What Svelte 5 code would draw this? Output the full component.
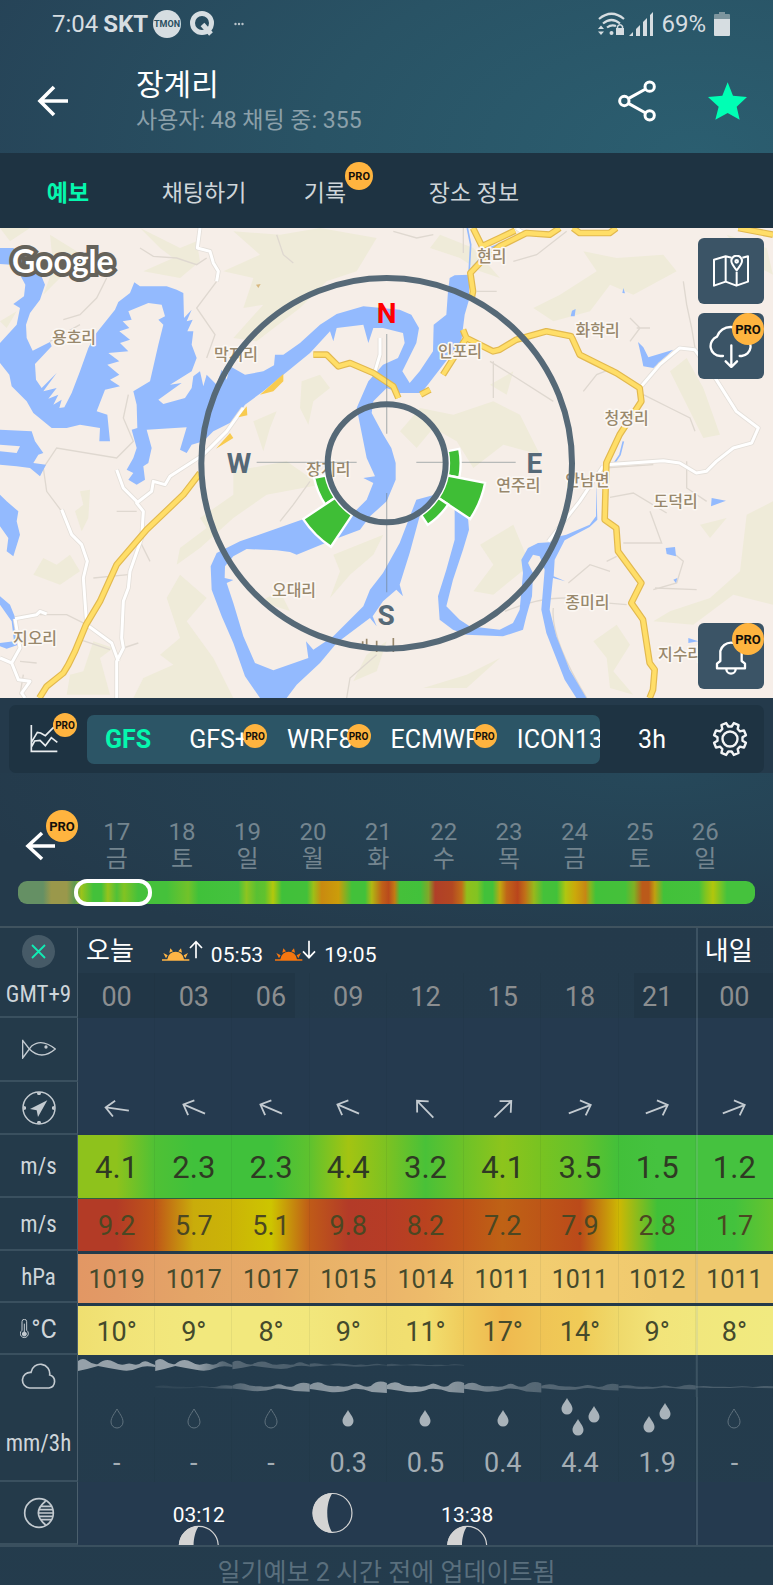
<script lang="ts">
  type Rose = { from: number; to: number; outer: number };

  const tabs = [
    { label: '예보', pro: false },
    { label: '채팅하기', pro: false },
    { label: '기록', pro: true },
    { label: '장소 정보', pro: false }
  ];
  let activeTab = $state('예보');

  const models = [
    { name: 'GFS', pro: false },
    { name: 'GFS+', pro: true },
    { name: 'WRF8', pro: true },
    { name: 'ECMWF', pro: true },
    { name: 'ICON13', pro: false }
  ];
  let activeModel = $state('GFS');

  const days = [
    ['17', '금'], ['18', '토'], ['19', '일'], ['20', '월'], ['21', '화'],
    ['22', '수'], ['23', '목'], ['24', '금'], ['25', '토'], ['26', '일']
  ];

  // wind strength over the whole forecast, percent -> colour
  const strip: [number, string][] = [
    [0, '#659064'], [3.4, '#659064'], [4.5, '#9a984b'], [6.6, '#9a984b'], [7.7, '#5e9a50'],
    [8.6, '#9bc31b'], [10.2, '#43c13a'], [11.3, '#43c13a'], [12.2, '#97c31c'], [13.4, '#50c038'],
    [14.4, '#82c322'], [16.3, '#45c13b'], [20.2, '#45c13b'], [23.1, '#72c22a'], [24.5, '#40c13a'],
    [29.9, '#45c23e'], [31, '#8ec420'], [32.4, '#58c033'], [33.5, '#60c22e'], [34.6, '#b4c80c'],
    [35.8, '#40c03a'], [39.2, '#43c03a'], [40.1, '#9dbf17'], [41.2, '#c98a10'], [43.5, '#cb9d0a'],
    [45.3, '#42c13a'], [47.1, '#42c13a'], [48, '#b0b813'], [49.4, '#c06018'], [50.3, '#b94a1c'],
    [51.1, '#c27a14'], [51.8, '#45c03a'], [54.6, '#42c13b'], [55.7, '#82a728'], [56.6, '#b03f28'],
    [58.9, '#b34722'], [60.2, '#c06f18'], [60.9, '#90c01c'], [62.3, '#82c422'], [63.3, '#42c13a'],
    [64.4, '#42c13a'], [65.4, '#c0a810'], [66.3, '#c06518'], [67.8, '#b9451c'], [68.8, '#c07018'],
    [70, '#98b81c'], [71.3, '#45c13a'], [73.1, '#42c13a'], [74.3, '#b0c610'], [75.6, '#cba80a'],
    [77, '#c68714'], [77.7, '#80b820'], [78.4, '#42c13a'], [82.4, '#45c13a'], [83.6, '#80b024'],
    [84.7, '#bb5a1a'], [85.6, '#bb5a1a'], [86.4, '#c0a010'], [87.6, '#42c13a'], [92.4, '#45c23c'],
    [93.3, '#80c420'], [94.3, '#b2c60c'], [96.2, '#45c23d'], [100, '#45c23d']
  ];
  const stripGradient = `linear-gradient(to right, ${strip.map(([p, c]) => `${c} ${p}%`).join(', ')})`;

  const hours = ['00', '03', '06', '09', '12', '15', '18', '21', '00'];
  const arrows = [188, 203, 203, 203, 226, -44, -21, -21, -21];
  const wind = ['4.1', '2.3', '2.3', '4.4', '3.2', '4.1', '3.5', '1.5', '1.2'];
  const gust = ['9.2', '5.7', '5.1', '9.8', '8.2', '7.2', '7.9', '2.8', '1.7'];
  const pressure = ['1019', '1017', '1017', '1015', '1014', '1011', '1011', '1012', '1011'];
  const temp = ['10', '9', '8', '9', '11', '17', '14', '9', '8'];
  const rain = ['-', '-', '-', '0.3', '0.5', '0.4', '4.4', '1.9', '-'];

  // two colours per column: left edge, centre, plus the closing edge
  const windColors = ['#8ec21c', '#8ec21c', '#4fc135', '#40c13b', '#40c13b', '#40c13b', '#5fc22e', '#a3c412', '#7cc222', '#49c138', '#6dc228', '#8dc41c', '#78c321', '#66c22b', '#42c03a', '#45c23f', '#45c23f', '#45c23f', '#45c23f'];
  const gustColors = ['#b33b26', '#b33b26', '#bf5518', '#c9ac0b', '#cbb407', '#cdc500', '#bf5a18', '#b33b28', '#b63c26', '#b9421f', '#bd5018', '#bf6215', '#bd5617', '#bb4a1a', '#cdb804', '#40c038', '#40c13b', '#43c23d', '#66c42e'];
  const pressureColors = ['#e29764', '#e29a66', '#e3a067', '#e4a567', '#e5a868', '#e6a967', '#e8b067', '#eab46a', '#ebb56a', '#edbb6a', '#efc46c', '#f1cb6f', '#f2cd70', '#f1cb6f', '#f1cb6f', '#efc96e', '#efc96e', '#efc96e', '#efc96e'];
  const tempColors = ['#efdf70', '#f1e377', '#f2e67b', '#f2e87d', '#f2e87d', '#f2e87d', '#f2e77c', '#f1e378', '#f0de70', '#f2e070', '#efcb5b', '#efb94f', '#efc455', '#f0cb57', '#efd96b', '#f2e47a', '#f1e77d', '#f1e97e', '#f1ea80'];

  function cellGradient(colors: string[], i: number) {
    return `linear-gradient(to right, ${colors[i * 2]}, ${colors[i * 2 + 1]}, ${colors[i * 2 + 2]})`;
  }

  // drop positions inside a 60x42 cell
  const drops: Record<string, number[][]> = {
    '4.4': [[17, 9], [44, 17], [28, 30]],
    '1.9': [[22, 27], [38, 14]]
  };

  // thickness of the cloud layers per column
  const highCloud = [1, 1, 0.7, 0.3, 0.2, 0, 0, 0, 0];
  const lowCloud = [0, 0.3, 0.8, 1, 1, 0.9, 0.6, 0.4, 0.2];

  const roses: Rose[] = [
    { from: -11.25, to: 11.25, outer: 222 },
    { from: 11.25, to: 33.75, outer: 301 },
    { from: 33.75, to: 56.25, outer: 222 },
    { from: 146.25, to: 168.75, outer: 222 },
    { from: 123.75, to: 146.25, outer: 301 }
  ];

  function polar(r: number, deg: number) {
    const a = (deg * Math.PI) / 180;
    return `${(1160 + r * Math.cos(a)).toFixed(1)} ${(706 + r * Math.sin(a)).toFixed(1)}`;
  }

  function sector({ from, to, outer }: Rose) {
    const inner = 187;
    return `M${polar(inner, from)}L${polar(outer, from)}A${outer} ${outer} 0 0 1 ${polar(outer, to)}L${polar(inner, to)}A${inner} ${inner} 0 0 0 ${polar(inner, from)}Z`;
  }

  function gear() {
    const pts: string[] = [];
    for (let i = 0; i < 8; i++) {
      for (const [off, r] of [[-15, 12.6], [-9, 16.4], [9, 16.4], [15, 12.6]]) {
        const a = ((i * 45 + off) * Math.PI) / 180;
        pts.push(`${(18 + r * Math.cos(a)).toFixed(2)},${(18 + r * Math.sin(a)).toFixed(2)}`);
      }
    }
    return pts.join(' ');
  }

  const places = [
    ['현리', 1475, 102], ['용호리', 222, 344], ['막지리', 708, 396], ['인포리', 1380, 387],
    ['화학리', 1793, 325], ['청정리', 1880, 588], ['장계리', 985, 741], ['연주리', 1555, 790],
    ['안남면', 1762, 774], ['도덕리', 2027, 838], ['오대리', 882, 1103], ['종미리', 1762, 1141],
    ['지오리', 105, 1247], ['지수리', 2040, 1297]
  ] as const;
</script>

{#snippet pro(size: string)}
  <span class="pro {size}">PRO</span>
{/snippet}

{#snippet moon(cx: number, cy: number)}
  <circle {cx} {cy} r="19.5" fill="none" stroke="#d4d4d4" stroke-width="1.2" />
  <path d="M{cx} {cy - 20}A20 20 0 0 0 {cx} {cy + 20}C{cx - 7} {cy + 10} {cx - 7} {cy - 10} {cx} {cy - 20}Z" fill="#d4d4d4" />
{/snippet}

<div class="app">
  <div class="top">
    <div class="status">
      <span>7:04</span>
      <b>SKT</b>
      <svg width="28" height="28" viewBox="0 0 28 28">
        <circle cx="14" cy="14" r="14" fill="#d6dde1" />
        <text x="14" y="17" text-anchor="middle" class="tmon">TMON</text>
      </svg>
      <svg class="q" width="26" height="26" viewBox="0 0 26 26" fill="none" stroke="#d6dde1" stroke-width="5">
        <circle cx="13" cy="12" r="9.5" />
        <path d="M13.500 13.500L22 23" />
      </svg>
      <svg class="more" width="10" height="4" viewBox="0 0 10 4" fill="#b9c4ca">
        <circle cx="1.500" cy="2" r="1.200" /><circle cx="5" cy="2" r="1.200" /><circle cx="8.500" cy="2" r="1.200" />
      </svg>
      <span class="spacer"></span>
      <svg width="27" height="24" viewBox="0 0 27 24" fill="none" stroke="#d6dde1" stroke-width="2.200">
        <path d="M1 7Q13.500-3.500 26 7M5 11.500Q13.500 4.500 22 11.500M9 15.500Q13.500 12 18 14" />
        <circle cx="13.500" cy="21" r="2" fill="#d6dde1" stroke="none" />
        <path d="M0 17L3 13.500L6 17ZM0 19.500L3 23L6 19.500Z" fill="#d6dde1" stroke="none" />
        <rect x="18" y="16" width="8" height="7" fill="#d6dde1" stroke="none" />
        <path d="M19.500 17V14.500Q22 11 24.500 14.500V17" stroke-width="1.500" />
      </svg>
      <svg class="signal" width="25" height="24" viewBox="0 0 25 24" fill="#d6dde1">
        <path d="M0 24L4 20V24ZM7 24V17L11 13V24ZM14 24V10L18 6V24ZM21 24V3L24 0V24Z" />
      </svg>
      <span>69%</span>
      <svg class="battery" width="16" height="24" viewBox="0 0 16 24">
        <path d="M0 7V3Q0 2 1 2H5V0H11V2H15Q16 2 16 3V7Z" fill="#7d959e" />
        <path d="M0 7H16V23Q16 24 15 24H1Q0 24 0 23Z" fill="#d6dde1" />
      </svg>
    </div>
    <header>
      <button class="back" aria-label="뒤로">
        <svg width="32" height="32" viewBox="0 0 32 32" fill="none" stroke="#fff" stroke-width="3.600">
          <path d="M31 16H3M17 2L3 16L17 30" />
        </svg>
      </button>
      <div class="title">
        <h1>장계리</h1>
        <p>사용자: 48 채팅 중: 355</p>
      </div>
      <button aria-label="공유">
        <svg width="40" height="42" viewBox="0 0 120 126" fill="none" stroke="#fff" stroke-width="9">
          <circle cx="98" cy="20" r="14" /><circle cx="22" cy="63" r="14" /><circle cx="98" cy="106" r="14" />
          <path d="M34 56L86 27M34 70L86 99" />
        </svg>
      </button>
      <button class="fav" aria-label="즐겨찾기">
        <svg width="39" height="38" viewBox="0 0 117 112" fill="#00ffb4">
          <path d="M59 0L75 40L117 44L86 73L95 112L59 92L22 112L32 73L0 44L43 40Z" />
        </svg>
      </button>
    </header>
  </div>

  <nav>
    {#each tabs as tab}
      <button class:active={activeTab === tab.label} onclick={() => (activeTab = tab.label)}>
        <span class="tag">{tab.label}{#if tab.pro}{@render pro('mid')}{/if}</span>
      </button>
    {/each}
  </nav>

  <section class="map">
    <svg class="tiles" viewBox="0 0 2319 1410" preserveAspectRatio="xMidYMid slice">
      <rect width="2319" height="1410" fill="#f6eee8" />
      <g fill="#efebd9">
        <path d="M420 0L540 60L590 40L600 100L540 150L430 130L520 90L480 60ZM150 20L230 70L200 130L130 200L160 120ZM0 0L90 0L30 40ZM0 280L50 250L20 300Z" />
        <path d="M700 10L840 20L960 0L1130 30L1070 130L980 160L900 240L770 340L700 330L790 230L730 240L760 150L670 130L780 80Z" />
        <path d="M905 460L960 440L990 480L940 520L925 590L900 540ZM760 580L830 550L810 600L790 670Z" />
        <path d="M1320 20L1420 60L1500 150L1440 130L1380 90L1290 60ZM1750 70L1850 90L1990 80L2030 130L1900 200L1830 170L1770 250L1660 280L1600 240L1680 200L1790 130ZM2010 430L2060 390L2110 480L2160 620L2110 630L2060 530Z" />
        <path d="M1200 610L1260 540L1360 560L1480 520L1560 560L1620 680L1510 650L1420 720L1370 640L1300 600L1250 660ZM1470 470L1540 430L1520 500ZM2180 20L2300 60L2319 140L2240 100Z" />
        <path d="M240 790L270 785L265 870L245 910L225 850L250 830ZM100 1040L130 990L170 1010L210 980L240 1030L180 1070Z" />
        <path d="M700 730L860 700L960 770L800 800L700 870L600 960L530 1010L540 960L620 900L600 870L700 800Z" />
        <path d="M500 1110L540 1040L620 1110L560 1180L640 1290L700 1410L400 1410L430 1350L520 1310L480 1280L540 1230ZM280 1240L340 1260L300 1290L330 1400L200 1400L210 1340L250 1330Z" />
        <path d="M1000 980L1150 920L1120 980L1050 1040L990 1110L1020 1030ZM780 1120L840 1090L870 1150ZM1100 1280L1160 1240L1130 1330L1060 1360Z" />
        <path d="M1440 950L1540 890L1590 1010L1480 1100L1420 1090L1480 1010ZM1780 1240L1850 1190L1890 1250L1840 1330L1900 1400L1830 1380L1820 1290Z" />
        <path d="M2240 860L2319 820L2319 1130L2200 1100L2080 1190L1960 1180L2010 1150L2130 1110L2220 1030ZM2100 890L2180 870L2130 930ZM1270 1380L1400 1340L1500 1290L1400 1380Z" />
      </g>
      <g fill="none" stroke="#dfd8d0" stroke-width="4">
        <path d="M420 60L460 85L530 90L590 110L620 90M320 150L290 210L240 260L190 275M650 160L590 240L645 320L620 390M830 20L850 80L880 105M385 500L370 570L400 640L350 690L170 660L130 720L140 790L185 850M240 290L150 340" />
        <path d="M2050 160L2060 230L2075 300L2085 360M1890 270L1920 300L1890 340M1910 300L1950 300M1470 400L1550 450L1660 520M1480 400V510M1750 490L1790 440L1840 420M1930 500L2010 540L2070 570L2085 610M1540 100L1610 80L1700 10M1180 10L1250 30L1300 20M1430 190H1490M1390 0L1390 75" />
        <path d="M930 760L880 830L840 880M350 850L410 850M420 940L450 1000M385 1040L280 1050M120 1160L200 1160L260 1190M240 1235L330 1265M370 1260L415 1245M60 1300L110 1305M70 1340L60 1400M1130 1280L1050 1350L1040 1410" />
        <path d="M1830 808L1900 795L2000 855M1870 945L1985 945L1950 850M1705 1065L1770 1010L1830 1030M1820 1000L1850 985M1960 1085L2030 1065L2050 1000L2020 975M1965 1080L2090 1085M1760 1120L1880 1130M1515 1150Q1660 1090 1760 1120M1660 1140Q1650 1230 1760 1410M2060 700V780L2120 820M1810 720L1960 710" />
      </g>
      <g fill="#93bafe">
        <path d="M0 345L50 290L60 240L40 228L72 205L76 170L60 140L35 110L0 108L0 60L40 60L110 110L135 170L120 215L90 255L78 290L80 330L98 368L150 342L155 355L105 408L108 455L125 480L170 435L130 490L170 480L145 512L175 500L160 530L185 515L178 540L193 538L215 495L240 430L265 360L285 320L345 245L355 222L390 195L403 163L420 175L500 175L530 185L550 195L552 270L575 245L560 280L578 275L562 310L580 310L575 350L590 390L575 430L510 470L545 465L475 515L490 528L555 510L575 480L580 445L600 430L610 475L620 440L650 470L665 425L680 455L690 415L735 440L790 430L822 412L825 380L850 380L900 345L960 290L1010 258L1090 235L1199 245L1234 260L1257 300L1249 345L1207 430L1229 465L1259 430L1299 370L1301 290L1339 260L1344 190L1349 150L1364 142L1407 140L1407 215L1394 260L1384 340L1299 450L1264 495L1199 495L1160 480L1120 520L1115 555L1150 620L1174 660L1187 705L1187 755L1160 820L1110 865L1080 905L1000 935L890 980L870 972L830 967L740 963L700 985L675 1015L674 1050L700 1056L680 1065L700 1125L730 1225L765 1305L820 1327L925 1290L918 1240L940 1265L1000 1225L1090 1135L1110 1085L1149 1035L1199 945L1249 815L1304 800L1300 835L1259 865L1229 975L1199 1070L1209 1105L1189 1085L1149 1120L1118 1165L1130 1195L1110 1170L1010 1245L960 1305L890 1370L860 1410L780 1410L735 1345L700 1245L665 1165L635 1085L632 1015L650 975L690 955L720 940L905 875L1060 855L1100 815L1120 765L1090 750L1125 745L1100 690L1070 540L1105 460L1149 410L1194 390L1214 345L1209 315L1149 300L1120 300L1105 345L1090 290L1010 300L1000 340L990 310L930 375L850 440L790 490L735 530L700 580L640 610L610 640L575 650L560 675L540 665L560 598L440 605L455 660L445 705L430 715L435 755L410 770L385 755L400 735L380 725L400 690L410 660L395 605L412 600L410 530L400 490L450 460L475 350L490 290L475 275L495 265L485 230L445 225L385 250L395 275L368 280L388 300L358 310L390 335L360 345L385 370L325 375L358 400L322 410L358 440L330 455L360 475L315 485L290 550L322 560L330 640L298 640L300 600L240 590L200 600L155 600L100 555L80 520L35 475L28 440L0 405Z" />
        <path d="M1364 845L1404 870L1407 905L1389 965L1359 1055L1339 1135L1379 1175L1409 1195L1499 1205L1539 1185L1559 1145L1569 1035L1564 995L1584 960L1614 945L1649 943L1679 925L1699 920L1769 890L1788 865L1788 760L1792 875L1769 897L1694 937L1664 995L1661 1045L1696 1060L1659 1050L1649 1145L1669 1225L1709 1325L1759 1410L1729 1410L1694 1355L1639 1215L1624 1145L1634 1025L1619 985L1599 980L1584 1005L1599 1035L1596 1105L1579 1165L1569 1205L1509 1225L1399 1220L1359 1205L1319 1175L1314 1105L1339 1025L1364 935Z" />
        <path d="M0 605L95 610L105 640L130 675L115 680L100 705L138 710L120 745L90 720L50 715L0 710V670L50 675L60 655L0 650ZM0 800L20 820L55 850L50 880L60 920L40 985L20 970L25 930L0 895ZM0 1105L30 1130L50 1180L55 1250L20 1262L0 1255V1245L42 1240L35 1180L0 1130Z" />
        <path d="M1914 342L1930 358L1945 388L2020 365L1960 420L1930 415L1925 390ZM1712 265L1716 248L1727 243L1724 265ZM1867 195L1870 180L1875 196ZM2135 810L2178 818L2133 835ZM1997 960L2025 957L2028 985L2000 978ZM2020 1055L2032 1050L2028 1065ZM2065 1230L2095 1240L2065 1245Z" />
      </g>
      <path d="M1402 0L1412 50L1407 140M1415 120L1470 60L1530 35M1870 640L1860 680L1840 710" fill="none" stroke="#93bafe" stroke-width="5" />
      <g fill="none" stroke-linejoin="round">
        {#each [['#e4dfd9', 14], ['#fff', 9]] as [color, width]}
          <path stroke={color} stroke-width={width} d="M600 0L592 60L630 70L640 105L655 130L650 160M730 540L680 610L610 680L510 745L495 770L460 760L455 790L410 825L430 850L425 930L390 1030L385 1080L370 1120L365 1230L370 1260L350 1300V1410M350 725L370 780L410 820M185 845L215 920L245 950L262 1000L250 1050L260 1190L335 1245L355 1300M45 1172L110 1160L120 1150L140 1158M0 1290L35 1305L60 1260L45 1172M35 1305L55 1355L90 1360L65 1395L75 1410M1140 330V380L1125 430" />
          <path stroke={color} stroke-width={width} d="M1924 475L1979 410L2039 360L2084 365L2149 455L2209 550L2275 600L2255 645L2200 660L2149 700L2119 730L2089 735L2039 705L1990 698L1819 710M1809 715L1739 820L1645 940M1550 0L1570 15" />
        {/each}
        {#each [['#e2b94f', 20], ['#ffde68', 13]] as [color, width]}
          <path stroke={color} stroke-width={width} d="M1419 0L1446 55L1499 30L1545 8M1449 95L1499 55L1579 15L1649 20L1679 0M1719 0L1739 15L1829 15L1849 0M2215 0L2319 20M1449 95L1411 135L1419 190L1414 215M1389 305L1399 330L1479 370L1499 365L1549 335L1639 310L1714 325L1739 380L1799 410L1849 435L1919 480L1924 520L1859 620L1819 705L1814 875L1849 900L1854 970L1924 1065L1894 1125L1929 1175L1949 1305L1964 1325L1959 1385L1949 1410M1329 440L1399 330M1262 500L1290 485M940 380H980L1015 415L1050 405L1120 435L1180 475L1195 510M600 735L550 800L440 905L350 1010L300 1120L258 1190L225 1270L205 1310L190 1335L140 1375L118 1410" />
        {/each}
      </g>
      <path d="M780 500L850 438V460L820 490ZM715 568L740 535L742 562ZM648 662L690 615L700 630Z" fill="#f8cb50" />
      <path d="M768 170L782 168L775 180Z" fill="#d8b880" />
      <g class="place">
        {#each places as [name, x, y]}
          <text {x} {y}>{name}</text>
        {/each}
      </g>
      <path d="M1088 1240V1250M1100 1232V1250M1130 1238V1272M1180 1230V1272" stroke="#98886c" stroke-width="5" />

      <path d="M770 703H1070M1249 703H1547M1160 318V617M1160 795V1093" stroke="#6a7a80" stroke-opacity="0.450" stroke-width="4" />
      {#each roses as rose}
        <path d={sector(rose)} fill="#3fbe36" stroke="#fff" stroke-width="7" />
      {/each}
      <g fill="none" stroke="#566977" stroke-width="18">
        <circle cx="1160" cy="706" r="556" />
        <circle cx="1160" cy="706" r="177" />
      </g>
      <g class="rose">
        <text class="north" x="1160" y="285">N</text>
        <text x="717" y="735">W</text>
        <text x="1603" y="735">E</text>
        <text x="1158" y="1190">S</text>
      </g>
    </svg>
    <span class="google">Google</span>
    <div class="tools">
      <button aria-label="지도">
        <svg width="36" height="32" viewBox="0 0 108 96" fill="none" stroke="#fff" stroke-width="6" stroke-linejoin="round">
          <path d="M56 8L38 4L3 14V92L38 80L70 92L105 80V4L88 8M38 4V80M71 50V92" />
          <path d="M71 46Q55 26 55 18A16 16 0 0 1 87 18Q87 26 71 46Z" />
          <circle cx="71" cy="19" r="4" />
        </svg>
      </button>
      <button aria-label="오프라인 저장">
        <svg width="44" height="44" viewBox="0 0 132 132" fill="none" stroke="#fff" stroke-width="7" stroke-linecap="round">
          <path d="M42 96H34A30 30 0 0 1 24 38A43 43 0 0 1 106 40A29 29 0 0 1 98 96H92" />
          <path d="M67 64V126M50 112L67 129L84 112" />
        </svg>
        {@render pro('big corner')}
      </button>
      <button aria-label="알림">
        <svg width="32" height="38" viewBox="0 0 96 114" fill="none" stroke="#fff" stroke-width="7" stroke-linejoin="round">
          <path d="M6 94V80L16 72V42A33 33 0 0 1 80 42V72L90 80V94ZM34 96A14 14 0 0 0 62 96" />
        </svg>
        {@render pro('big corner')}
      </button>
    </div>
  </section>

  <section class="models">
    <button class="chart" aria-label="그래프">
      <svg width="28" height="28" viewBox="0 0 84 84" fill="none" stroke="#e9edef" stroke-width="5">
        <path d="M4 0V79H82M4 52L22 22L32 24L46 32L70 8L82 16M4 66L14 48L30 46L46 62L64 38L82 52" />
      </svg>
      {@render pro('small')}
    </button>
    <div class="scroller">
      {#each models as model}
        <button class:active={activeModel === model.name} onclick={() => (activeModel = model.name)}>
          {model.name}{#if model.pro}{@render pro('small')}{/if}
        </button>
      {/each}
    </div>
    <button>3h</button>
    <button class="settings" aria-label="설정">
      <svg width="36" height="36" viewBox="0 0 36 36" fill="none" stroke="#f2f4f5" stroke-width="2.400" stroke-linejoin="round">
        <polygon points={gear()} transform="rotate(22.500 18 18)" />
        <circle cx="18" cy="18" r="7.500" />
      </svg>
    </button>
  </section>

  <section class="timeline">
    <div class="days">
      <button class="earlier" aria-label="이전">
        <svg width="31" height="30" viewBox="0 0 31 30" fill="none" stroke="#fff" stroke-width="3.600">
          <path d="M30 15H3M17 2L3 15L17 28" />
        </svg>
        {@render pro('big')}
      </button>
      {#each days as [num, name]}
        <div class="day">{num}<br />{name}</div>
      {/each}
    </div>
    <div class="strip" style="background: {stripGradient}">
      <span class="window"></span>
    </div>
  </section>

  <table>
    <tbody>
      <tr class="dates">
        <th rowspan="2" scope="row">
          <button class="close" aria-label="닫기">
            <svg width="15" height="15" viewBox="0 0 15 15" stroke="#10ecb4" stroke-width="1.800"><path d="M1 1L14 14M14 1L1 14" /></svg>
          </button>
          <span class="zone">GMT+9</span>
        </th>
        <td colspan="8">
          <div class="today">
            <span class="name">오늘</span>
            {#each [['05:53', '#ffb545', true], ['19:05', '#f5760f', false]] as [time, color, up]}
              <svg width="41" height="21" viewBox="0 0 123 63">
                <path fill={color as string} d="M0 62V58H16Q20 35 41 35Q62 35 66 58H82V62ZM4 39L17 46L12 55ZM25 25L33 34L22 38ZM57 25L49 34L60 38ZM78 39L65 46L70 55Z" />
                <path fill="none" stroke="#fff" stroke-width="5" d={up ? 'M102 55V6M84 24L102 5L120 24' : 'M102 2V51M84 34L102 53L120 34'} />
              </svg>
              <span class="time">{time}</span>
            {/each}
          </div>
        </td>
        <td class="next tomorrow"><span class="name">내일</span></td>
      </tr>
      <tr class="hours">
        {#each hours as hour, i}
          <td class:night={i < 2 || i === 8} class:dawn={i === 2} class:dusk={i === 7} class:next={i === 8}>{hour}</td>
        {/each}
      </tr>
      <tr class="fish">
        <th scope="row">
          <svg width="34" height="20" viewBox="0 0 102 60" fill="none" stroke="#c3cad0" stroke-width="4">
            <path d="M2 2V57L28 22Q58-4 100 30Q58 66 22 30L2 4M2 57L22 30" />
            <circle cx="72" cy="24" r="5" fill="#c3cad0" stroke="none" />
          </svg>
        </th>
        {#each hours as _, i}<td class:next={i === 8}></td>{/each}
      </tr>
      <tr class="direction">
        <th scope="row">
          <svg width="34" height="34" viewBox="0 0 102 102" fill="#c3cad0">
            <circle cx="51" cy="51" r="48" fill="none" stroke="#c3cad0" stroke-width="4.500" />
            <path d="M76 28L48 78L44 58L24 54ZM44 4H58L55 12H47ZM44 98H58L55 90H47ZM4 44V58L12 55V47ZM98 44V58L90 55V47Z" />
          </svg>
        </th>
        {#each arrows as deg, i}
          <td class:next={i === 8}>
            <svg width="26" height="26" viewBox="0 0 26 26" fill="none" stroke="#c3cad0" stroke-width="1.800">
              <path d="M1 13H24M16 5L24.500 13L16 21" transform="rotate({deg} 13 13)" />
            </svg>
          </td>
        {/each}
      </tr>
      <tr class="wind">
        <th scope="row">m/s</th>
        {#each wind as value, i}<td class:next={i === 8} style="background: {cellGradient(windColors, i)}">{value}</td>{/each}
      </tr>
      <tr class="gust">
        <th scope="row">m/s</th>
        {#each gust as value, i}<td class:next={i === 8} style="background: {cellGradient(gustColors, i)}">{value}</td>{/each}
      </tr>
      <tr class="pressure">
        <th scope="row">hPa</th>
        {#each pressure as value, i}<td class:next={i === 8} style="background: {cellGradient(pressureColors, i)}">{value}</td>{/each}
      </tr>
      <tr class="temp">
        <th scope="row">
          <span class="unit">
            <svg width="9" height="20" viewBox="0 0 27 60" fill="none" stroke="#c3cad0" stroke-width="3">
              <path d="M6 34V8A7 7 0 0 1 20 8V34A12 12 0 1 1 6 34Z" />
              <path d="M13 14V40" />
              <circle cx="13" cy="45" r="6" fill="#c3cad0" />
            </svg>°C
          </span>
        </th>
        {#each temp as value, i}<td class:next={i === 8} style="background: {cellGradient(tempColors, i)}">{value}°</td>{/each}
      </tr>
      <tr class="clouds">
        <th scope="row">
          <svg width="36" height="26" viewBox="0 0 108 78" fill="none" stroke="#c3cad0" stroke-width="5">
            <path d="M26 75A23 23 0 0 1 30 28A28 28 0 0 1 86 36A20 20 0 0 1 84 75Z" />
          </svg>
        </th>
        <td colspan="9">
          <svg class="wave" viewBox="0 0 693 42" preserveAspectRatio="none" fill="#a3adb4">
            <defs>
              <linearGradient id="high">
                <stop offset="0.17" stop-color="#fff" stop-opacity="0.9" />
                <stop offset="0.21" stop-color="#fff" stop-opacity="0.4" />
                <stop offset="0.46" stop-color="#fff" stop-opacity="0.2" />
              </linearGradient>
              <linearGradient id="low">
                <stop offset="0.17" stop-color="#fff" stop-opacity="0.1" />
                <stop offset="0.3" stop-color="#fff" stop-opacity="0.75" />
                <stop offset="0.5" stop-color="#fff" stop-opacity="0.9" />
                <stop offset="0.65" stop-color="#fff" stop-opacity="0.4" />
                <stop offset="0.8" stop-color="#fff" stop-opacity="0.3" />
              </linearGradient>
              <mask id="highMask"><rect width="693" height="21" fill="url(#high)" /></mask>
              <mask id="lowMask"><rect y="21" width="693" height="21" fill="url(#low)" /></mask>
            </defs>
            <g mask="url(#highMask)">
              {#each highCloud as size, i}
                {#if size}
                  <path transform="translate({i * 77} 10) scale(1 {size})" d="M0-4Q5-8 10-4Q15 0 20-1Q28-8 36-3Q42 1 48-1Q51-2 54-1Q60 1 64-3Q68-5 72-2L77 0V2Q66 0 60 3Q52 7 42 5Q30 3 20 1Q10 4 0 6Z" />
                {/if}
              {/each}
            </g>
            <g mask="url(#lowMask)">
              {#each lowCloud as size, i}
                {#if size}
                  <path transform="translate({i * 77} 32) scale(1 {size})" d="M0-2Q6-6 12-4Q18 0 28-1Q36 1 42-2Q46-5 51-2Q56 1 61-1Q68-8 77-4V6L62 5Q52 1 42 2Q32 6 20 5Q8 3 0 2Z" />
                {/if}
              {/each}
            </g>
            <path d="M617 0V42" stroke="#a0b4be" stroke-opacity="0.200" stroke-width="2" />
          </svg>
        </td>
      </tr>
      <tr class="rain">
        <th scope="row">mm/3h</th>
        {#each rain as value, i}
          <td class:next={i === 8}>
            <svg width="60" height="42" viewBox="0 0 60 42">
              {#if value === '-'}
                <path d="M30 12C28 16 24 20 24 25A6 6 0 0 0 36 25C36 20 32 16 30 12Z" fill="none" stroke="#5f717d" />
              {:else}
                {#each drops[value] ?? [[30, 21]] as [x, y]}
                  <path transform="translate({x} {y})" d="M0-8C-2-4-5.500-1-5.500 3A5.500 5.500 0 0 0 5.500 3C5.500-1 2-4 0-8Z" fill="#a9b3ba" />
                {/each}
              {/if}
            </svg>
            <span>{value}</span>
          </td>
        {/each}
      </tr>
      <tr class="moon">
        <th scope="row">
          <svg width="32" height="32" viewBox="0 0 96 96" fill="none" stroke="#c3cad0" stroke-width="5">
            <circle cx="48" cy="48" r="43" />
            <path d="M68 12Q24 48 68 84M54 28H84M48 38H90M46 48H92M48 58H90M54 68H84" />
          </svg>
        </th>
        <td colspan="8">
          <svg class="phases" viewBox="0 0 619 63">
            <text x="121" y="40">03:12</text>
            {@render moon(121, 64)}
            {@render moon(255, 31)}
            <text x="390" y="40">13:38</text>
            {@render moon(390, 64)}
          </svg>
        </td>
        <td class="next"></td>
      </tr>
    </tbody>
  </table>

  <footer>일기예보 2 시간 전에 업데이트됨</footer>
</div>

<style>
  :global(body) {
    margin: 0;
    background: #243a4b;
  }
  .app {
    font-family: Roboto, "Noto Sans CJK KR", sans-serif;
    color: #fff;
    background: linear-gradient(170deg, #243a4b 60%, #243c4d);
    overflow: hidden;
  }
  button {
    border: 0;
    padding: 0;
    background: none;
    font: inherit;
    color: inherit;
    cursor: pointer;
    position: relative;
  }
  svg {
    display: block;
    flex: none;
  }

  .pro {
    position: absolute;
    border-radius: 50%;
    background: #ffb43f;
    color: #14100a;
    font-weight: 700;
    text-align: center;
  }
  .small { width: 24px; height: 24px; line-height: 25px; font-size: 10px; }
  .mid { width: 28px; height: 28px; line-height: 29px; font-size: 11px; }
  .big { width: 32px; height: 32px; line-height: 33px; font-size: 13px; }
  .corner { top: 0; right: 0; }

  .top {
    background: radial-gradient(ellipse 760px 420px at 90% 100%, #2b5e70, #295365 50%, #264357);
  }
  .status {
    display: flex;
    align-items: center;
    height: 48px;
    padding: 0 43px 0 52px;
    font-size: 24px;
    color: #d6dde1;
  }
  .status b { margin: 0 5px; }
  .q { margin: 0 19px 0 8px; }
  .tmon {
    font-size: 9px;
    font-weight: 700;
    fill: #2a4e60;
  }
  .spacer { flex: 1; }
  .signal { margin: 0 7px 0 4px; }
  .battery { margin-left: 8px; }
  header {
    display: flex;
    align-items: center;
    height: 105px;
    padding: 0 26px 0 37px;
  }
  .title {
    flex: 1;
    padding: 3px 0 0 67px;
  }
  h1 {
    margin: 0;
    font-size: 30px;
    line-height: 38px;
    font-weight: 400;
  }
  .title p {
    margin: 0;
    font-size: 23px;
    line-height: 34px;
    color: #8ba0aa;
  }
  .fav { margin-left: 51px; }

  nav {
    display: grid;
    grid-template-columns: 136px 136px 106px 192px;
    height: 75px;
    background: #1e3342;
    font-size: 23px;
    color: #cfd6da;
  }
  nav .active {
    color: #05f7ae;
    font-weight: 700;
  }
  .tag { position: relative; }
  .tag .pro { top: -18px; right: -27px; }

  .map {
    position: relative;
    height: 470px;
  }
  .tiles {
    width: 100%;
    height: 100%;
  }
  .place {
    font-size: 48px;
    font-weight: 500;
    text-anchor: middle;
    fill: #98886c;
    stroke: #fbf7f3;
    stroke-width: 10;
    paint-order: stroke;
    stroke-linejoin: round;
  }
  .rose {
    font-size: 84px;
    font-weight: 700;
    text-anchor: middle;
    fill: #566977;
  }
  .north { fill: #f00; }
  .google {
    position: absolute;
    top: 12px;
    left: 12px;
    font: 700 32px/42px Lato, sans-serif;
    color: #fff;
    -webkit-text-stroke: 8px #65625a;
    paint-order: stroke fill;
  }
  .tools {
    position: absolute;
    top: 10px;
    right: 9px;
    bottom: 9px;
    display: flex;
    flex-direction: column;
    gap: 9px;
  }
  .tools button {
    display: grid;
    place-items: center;
    width: 66px;
    height: 66px;
    border-radius: 6px;
    background: #3b5466;
  }
  .tools button:last-child { margin-top: auto; }

  .models {
    display: grid;
    grid-template-columns: 78px 1fr 104px 60px;
    align-items: center;
    height: 68px;
    margin: 7px 9px 0;
    border-radius: 7px;
    background: #1e3342;
    font-size: 25px;
  }
  .chart { padding-left: 21px; }
  .chart .pro { top: -12px; left: 44px; }
  .settings { padding-left: 8px; }
  .scroller {
    display: flex;
    gap: 38px;
    height: 49px;
    padding-left: 18px;
    border-radius: 7px;
    background: #2c5566;
    overflow: hidden;
  }
  .scroller .active {
    color: #05f7ae;
    font-weight: 700;
  }
  .scroller .pro { top: 9px; right: -18px; }

  .timeline {
    padding: 46px 18px 22px;
    border-bottom: 2px solid #40535f;
    background: radial-gradient(ellipse 700px 200px at 85% 0, #26485a, transparent);
  }
  .days {
    display: grid;
    grid-template-columns: 66px repeat(10, 1fr);
    align-items: center;
    margin-right: 17px;
    font-size: 24px;
    line-height: 27px;
    color: #74858f;
    text-align: center;
  }
  .earlier { padding-left: 7px; }
  .earlier .pro { top: -21px; left: 28px; }
  .strip {
    position: relative;
    height: 23px;
    margin-top: 8px;
    border-radius: 9px;
  }
  .window {
    position: absolute;
    top: -2px;
    left: 56px;
    box-sizing: border-box;
    width: 78px;
    height: 27px;
    border: 4px solid #fff;
    border-radius: 13px;
  }

  table {
    width: 100%;
    table-layout: fixed;
    border-spacing: 0;
    text-align: center;
  }
  th, td {
    box-sizing: border-box;
    padding: 0;
  }
  th {
    width: 78px;
    border-right: 1px solid #4b5f6d;
    border-bottom: 2px solid #3a505f;
    background: #243a4a;
    font: 400 23px "Roboto Condensed", "Liberation Sans Narrow", Roboto, sans-serif;
    color: #ced5da;
  }
  th > svg, .direction td svg, .rain td svg { margin: 0 auto; }
  td { box-shadow: inset -1px 0 rgba(20, 30, 40, 0.06); }
  td.next { box-shadow: inset 2px 0 rgba(160, 180, 190, 0.2); }
  .dates td { height: 45px; box-shadow: none; }
  .dates td.next { box-shadow: inset 2px 0 rgba(160, 180, 190, 0.2); }
  .dates td.tomorrow {
    padding-left: 9px;
    text-align: left;
  }
  .dates th { padding-top: 4px; }
  .today {
    display: flex;
    align-items: center;
    padding-left: 8px;
  }
  .today .name { margin-right: 28px; }
  .name { font-size: 26px; line-height: 38px; }
  .time {
    margin: 8px 12px 0 8px;
    font-size: 21px;
    line-height: 24px;
  }
  .close {
    display: grid;
    place-items: center;
    width: 33px;
    height: 33px;
    margin: 0 auto 8px;
    border-radius: 50%;
    background: #465a67;
  }
  .zone { line-height: 38px; }
  .hours td {
    height: 45px;
    padding-top: 2px;
    font-size: 27px;
    color: #8b8e90;
  }
  .night { background: #213646; }
  .dawn { background: linear-gradient(to right, #213646 81%, transparent 81%); }
  .dusk { background: linear-gradient(to right, transparent 20%, #213646 20%); }
  .fish td { height: 64px; background: #253a4f; }
  .direction td { height: 53px; background: #253a4f; }
  .wind th, .gust th, .pressure th, .temp th { padding-top: 2px; }
  .wind td {
    height: 63px;
    padding-top: 2px;
    font-size: 31px;
    color: #2f3a23;
  }
  .gust td {
    height: 53px;
    padding-top: 2px;
    border-top: 1px solid #2f6040;
    font-size: 27px;
    color: #4b4722;
  }
  .pressure td, .temp td {
    height: 52px;
    padding-top: 2px;
    border-top: 3px solid #243a4a;
    color: #454a2c;
  }
  .pressure td { font-size: 25px; }
  .temp td { font-size: 27px; }
  .unit {
    display: flex;
    justify-content: center;
    align-items: center;
    gap: 2px;
    font-family: Roboto, sans-serif;
    font-size: 25px;
  }
  .clouds th { height: 42px; border-bottom: 0; }
  .wave { width: 100%; height: 42px; }
  .rain th { padding-top: 10px; }
  .rain td {
    height: 85px;
    vertical-align: top;
    font-size: 27px;
    line-height: 48px;
    color: #a3adb4;
  }
  .rain span { display: block; height: 43px; }
  .moon td { height: 63px; background: #253a4f; }
  .phases {
    width: 100%;
    font-size: 21px;
    fill: #fff;
    text-anchor: middle;
  }

  footer {
    padding-top: 14px;
    border-top: 2px solid #3a505f;
    font-size: 25px;
    line-height: 24px;
    text-align: center;
    color: #5a6f7d;
  }
</style>
